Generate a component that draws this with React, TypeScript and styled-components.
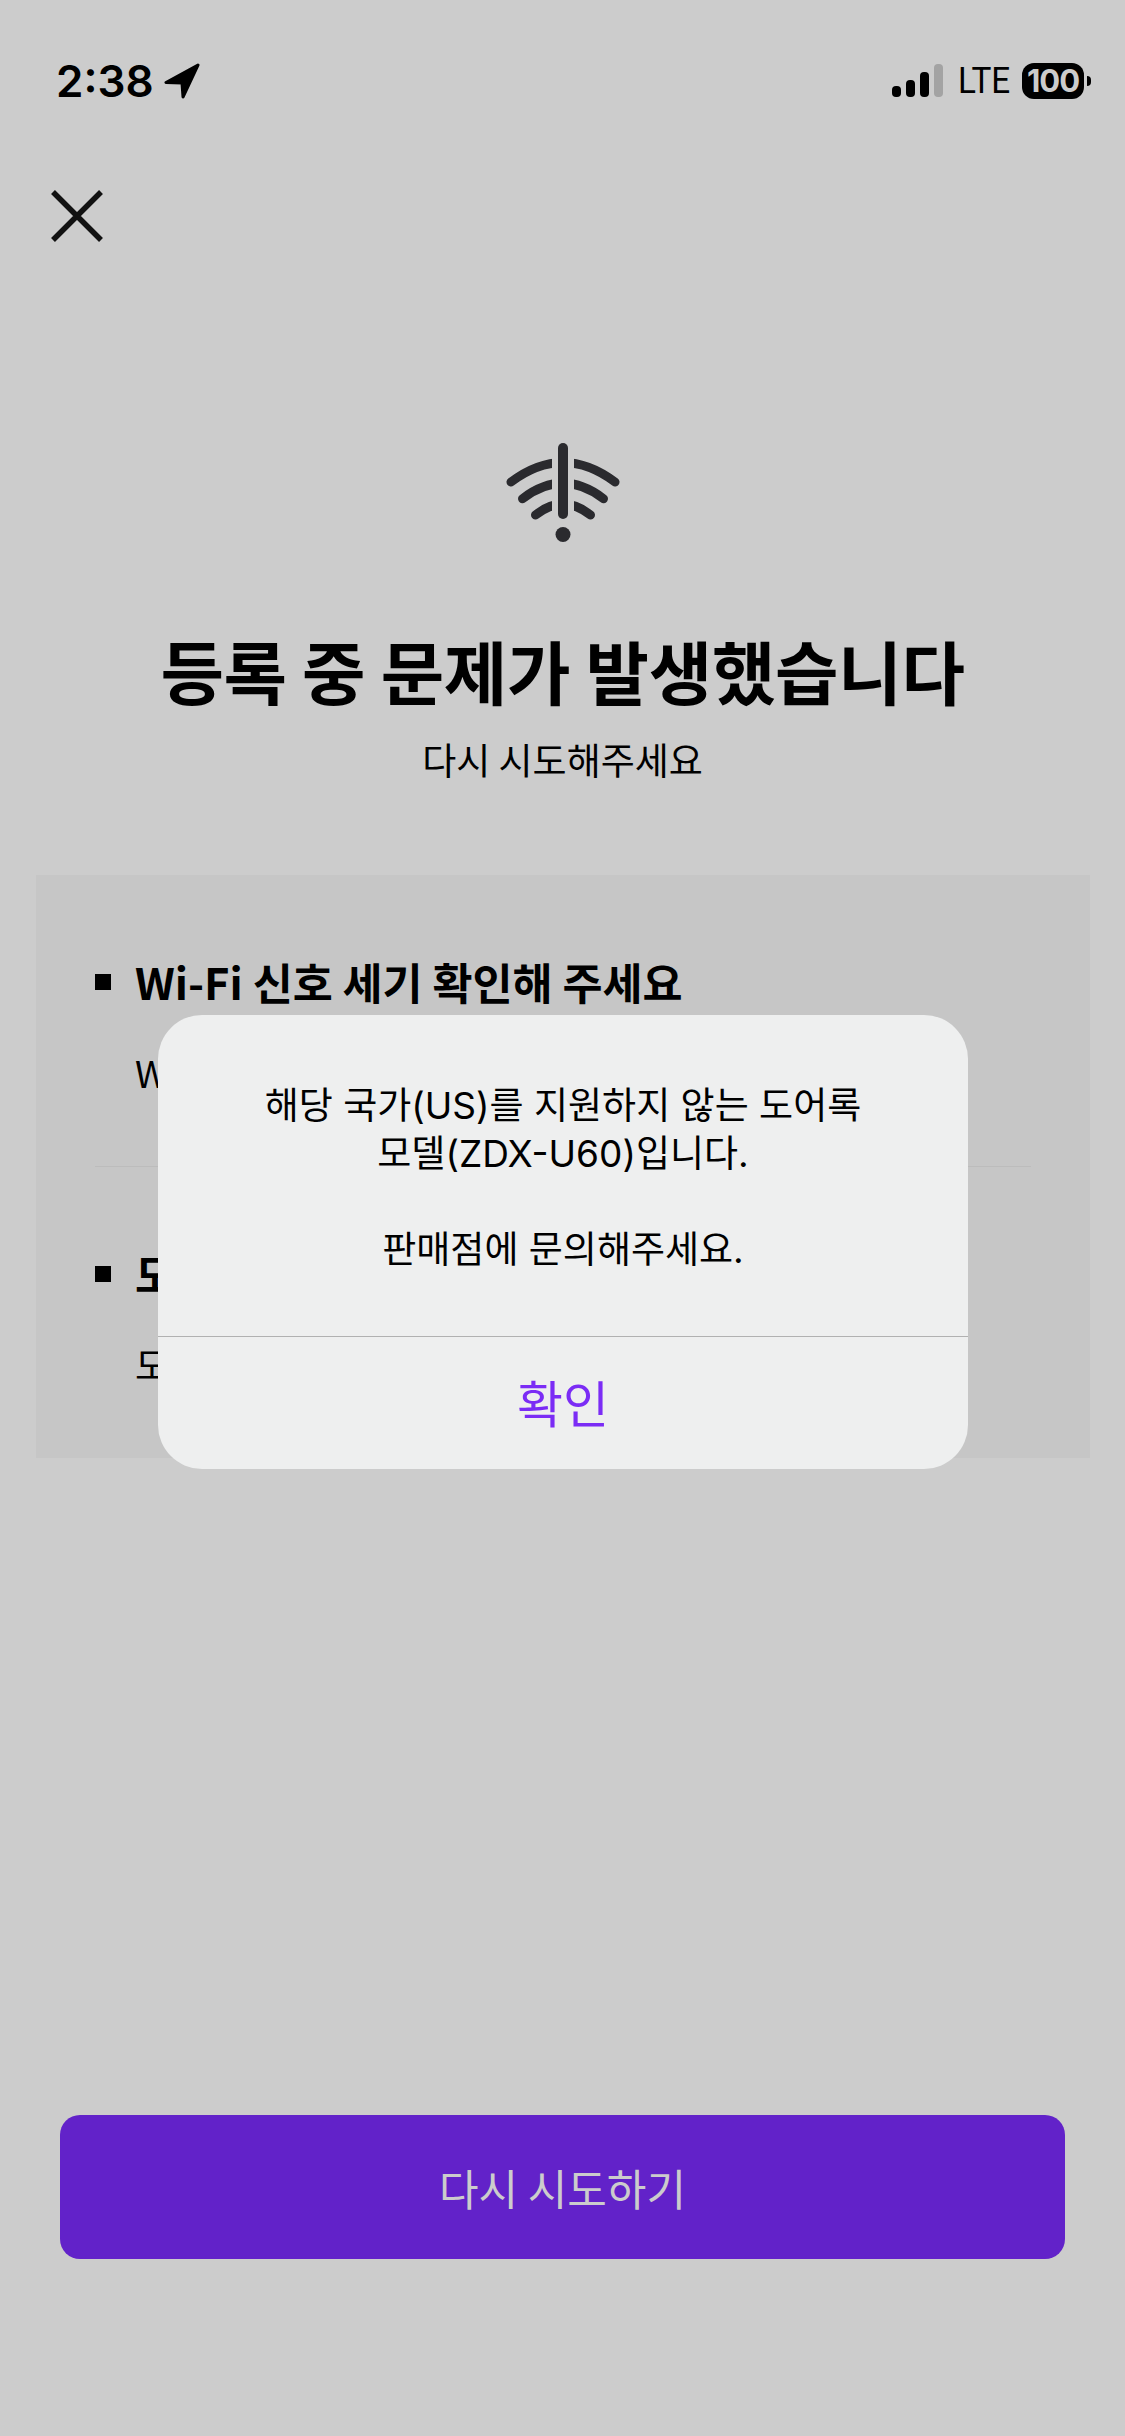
import styled, { createGlobalStyle } from "styled-components"

const GlobalStyle = createGlobalStyle`
	html, body {
		margin: 0;
		padding: 0;
		background-color: #cccccc;
	}
	* {
		box-sizing: border-box;
	}
`

const KR = `"Noto Sans CJK KR", "Noto Sans", sans-serif`
const MIXED = `Inter, "Noto Sans CJK KR", sans-serif`

const Page = styled.div`
	position: relative;
	width: 1125px;
	height: 2436px;
	overflow: hidden;
	background-color: #cccccc;
	font-family: ${KR};
	color: #000;
	display: flex;
	flex-direction: column;
`
const StatusBar = styled.div`
	height: 100px;
	padding: 57px 34px 0 56px;
	display: flex;
	justify-content: space-between;
	align-items: flex-start;
`
const TimeGroup = styled.div`
	display: flex;
	align-items: center;
	gap: 10px;
	height: 48px;
`
const Time = styled.span`
	font-family: Inter, sans-serif;
	font-size: 44px;
	font-weight: 600;
	line-height: 48px;
`
const StatusRight = styled.div`
	display: flex;
	align-items: center;
	height: 48px;
`
const Lte = styled.span`
	font-family: Roboto, sans-serif;
	font-size: 37px;
	line-height: 48px;
	width: 50px;
	margin-left: 15px;
	margin-right: 14px;
	transform: scaleX(0.9);
	transform-origin: left center;
	white-space: nowrap;
`
const Battery = styled.span`
	width: 62px;
	height: 36px;
	border-radius: 12px;
	background-color: #000;
	color: #cccccc;
	font-family: Inter, sans-serif;
	font-size: 31px;
	font-weight: 700;
	line-height: 36px;
	text-align: center;
	letter-spacing: -1px;
`
const BatteryNub = styled.span`
	width: 4px;
	height: 10px;
	margin-left: 3px;
	background-color: #000;
	border-radius: 0 5px 5px 0;
`
const CloseRow = styled.div`
	padding: 89px 0 0 50px;
	height: 190px;
	display: flex;
	align-items: flex-start;
`
const Hero = styled.div`
	padding-top: 153px;
	display: flex;
	flex-direction: column;
	align-items: center;
`
const Title = styled.h1`
	margin: 78px 0 0;
	font-size: 69px;
	font-weight: 700;
	line-height: 100px;
	letter-spacing: -0.3px;
`
const Subtitle = styled.p`
	margin: 14px 0 0;
	font-size: 37px;
	font-weight: 400;
	line-height: 50px;
`
const Panel = styled.div`
	margin: 91px 35px 0 36px;
	height: 583px;
	background-color: #c6c6c6;
	padding: 0 59px;
`
const TipBlock = styled.div<{ $divided?: boolean }>`
	height: ${(p) => (p.$divided ? 292 : 291)}px;
	padding-top: 72px;
	border-bottom: ${(p) => (p.$divided ? "1px solid #bcbcbc" : "none")};
`
const TipHeading = styled.div`
	display: flex;
	align-items: center;
	gap: 24px;
	font-size: 43.5px;
	font-weight: 700;
	line-height: 70px;
	&::before {
		content: "";
		width: 16px;
		height: 16px;
		background-color: #000;
	}
`
const TipBody = styled.div`
	margin: 30px 0 0 40px;
	font-size: 37px;
	line-height: 50px;
`
const ActionArea = styled.div`
	margin-top: auto;
	padding: 0 60px 177px;
`
const RetryButton = styled.button`
	width: 100%;
	height: 144px;
	border: none;
	border-radius: 20px;
	background-color: #6222c9;
	color: #cccccc;
	font-family: ${KR};
	font-size: 43px;
	font-weight: 400;
`
const Dialog = styled.div`
	position: absolute;
	left: 158px;
	top: 1015px;
	width: 810px;
	height: 454px;
	border-radius: 44px;
	background-color: #eeefef;
	display: flex;
	flex-direction: column;
`
const DialogBody = styled.div`
	height: 322px;
	padding-top: 67px;
	border-bottom: 1px solid #b1b1b1;
	text-align: center;
	font-family: ${MIXED};
	font-size: 37px;
	line-height: 48px;
`
const DialogLine = styled.div<{ $gap?: boolean }>`
	margin-top: ${(p) => (p.$gap ? 48 : 0)}px;
`
const DialogAction = styled.button`
	flex: 1;
	border: none;
	background: none;
	padding: 0 0 5px;
	color: #7b2cf5;
	font-family: ${KR};
	font-size: 50px;
	font-weight: 400;
`

function App() {
	return (
		<Page>
			<GlobalStyle />
			<StatusBar>
				<TimeGroup>
					<Time>2:38</Time>
					<svg width="36" height="36" viewBox="0 0 36 36">
						<path d="M34 2 L2 19.5 L18 20 L19 34 Z" fill="#000" stroke="#000" strokeWidth="3" strokeLinejoin="round" />
					</svg>
				</TimeGroup>
				<StatusRight>
					<svg width="51" height="34" viewBox="0 0 51 34">
						<rect x="0" y="22" width="9" height="11" rx="4" fill="#000" />
						<rect x="14" y="16" width="9" height="17" rx="4" fill="#000" />
						<rect x="28" y="8" width="9" height="25" rx="4" fill="#000" />
						<rect x="42" y="0" width="9" height="33" rx="4" fill="#a3a3a3" />
					</svg>
					<Lte>LTE</Lte>
					<Battery>100</Battery>
					<BatteryNub />
				</StatusRight>
			</StatusBar>
			<CloseRow>
				<svg width="54" height="54" viewBox="0 0 54 54">
					<path d="M3 3 L51 51 M51 3 L3 51" stroke="#111" strokeWidth="5.5" fill="none" />
				</svg>
			</CloseRow>
			<Hero>
				<svg width="114" height="99" viewBox="0 0 114 99">
					<defs>
						<clipPath id="wifi-gap">
							<rect x="0" y="0" width="46" height="99" />
							<rect x="68" y="0" width="46" height="99" />
						</clipPath>
					</defs>
					<g clipPath="url(#wifi-gap)" stroke="#2a2a2e" strokeWidth="9" strokeLinecap="round" fill="none">
						<path d="M5 39 Q57 0 109 39" />
						<path d="M16.5 55.7 Q57 24.7 97.5 55.7" />
						<path d="M29.5 72 Q57 50 84.5 72" />
					</g>
					<path d="M57 5 L57 71" stroke="#2a2a2e" strokeWidth="10" strokeLinecap="round" />
					<circle cx="57" cy="91.5" r="7.5" fill="#2a2a2e" />
				</svg>
				<Title>등록 중 문제가 발생했습니다</Title>
				<Subtitle>다시 시도해주세요</Subtitle>
			</Hero>
			<Panel>
				<TipBlock $divided>
					<TipHeading>Wi-Fi 신호 세기 확인해 주세요</TipHeading>
					<TipBody>Wi-Fi</TipBody>
				</TipBlock>
				<TipBlock>
					<TipHeading>도어록</TipHeading>
					<TipBody>도어록</TipBody>
				</TipBlock>
			</Panel>
			<ActionArea>
				<RetryButton>다시 시도하기</RetryButton>
			</ActionArea>
			<Dialog>
				<DialogBody>
					<DialogLine>해당 국가(US)를 지원하지 않는 도어록</DialogLine>
					<DialogLine>모델(ZDX-U60)입니다.</DialogLine>
					<DialogLine $gap>판매점에 문의해주세요.</DialogLine>
				</DialogBody>
				<DialogAction>확인</DialogAction>
			</Dialog>
		</Page>
	)
}

export default App
